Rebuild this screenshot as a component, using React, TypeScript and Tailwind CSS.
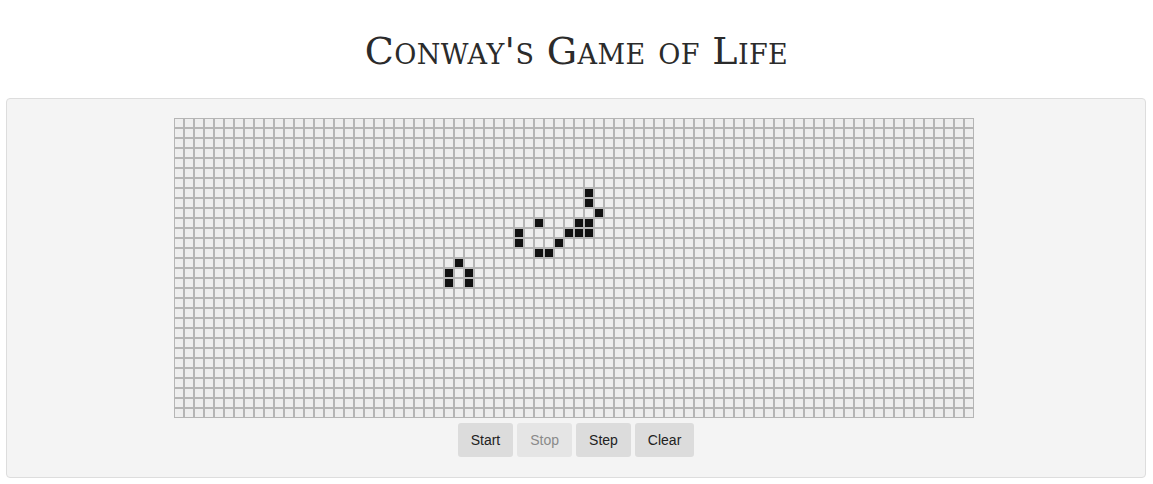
import { useState } from "react";

const COLS = 80;
const ROWS = 30;

const initialLive: [number, number][] = [
  [7, 41],
  [8, 41],
  [9, 42],
  [10, 36],
  [10, 40],
  [10, 41],
  [11, 34],
  [11, 39],
  [11, 40],
  [11, 41],
  [12, 34],
  [12, 38],
  [13, 36],
  [13, 37],
  [14, 28],
  [15, 27],
  [15, 29],
  [16, 27],
  [16, 29],
];

const makeBoard = () => {
  const board: boolean[][] = Array.from({ length: ROWS }, () =>
    Array(COLS).fill(false)
  );
  initialLive.forEach(([r, c]) => {
    board[r][c] = true;
  });
  return board;
};

const Cell = ({ alive, onClick }: { alive: boolean; onClick: () => void }) => (
  <div
    onClick={onClick}
    className={`w-[10px] h-[10px] border border-[#b5b5b5] ${
      alive ? "bg-[#111111]" : "bg-[#eeeeee]"
    }`}
  />
);

const Button = ({
  label,
  disabled,
  onClick,
}: {
  label: string;
  disabled?: boolean;
  onClick?: () => void;
}) => (
  <button
    disabled={disabled}
    onClick={onClick}
    className={`h-[34px] px-[13px] rounded-[3px] text-[14px] ${
      disabled ? "bg-[#e5e5e5] text-[#8a8a8a]" : "bg-[#dcdcdc] text-[#222]"
    }`}
  >
    {label}
  </button>
);

const App = () => {
  const [board, setBoard] = useState(makeBoard);

  const toggle = (r: number, c: number) => {
    setBoard((b) =>
      b.map((row, ri) => row.map((v, ci) => (ri === r && ci === c ? !v : v)))
    );
  };

  return (
    <div className="min-h-screen bg-white font-['Liberation_Sans',Arial,sans-serif]">
      <div className="h-[98px] flex items-center justify-center">
        <h1
          className="text-[38px] text-[#2b2b2b] pt-[4px] font-['DejaVu_Serif','Liberation_Serif',serif] [font-variant:small-caps] tracking-[0.4px]"
        >
          Conway's Game of Life
        </h1>
      </div>
      <div className="ml-[6px] mr-[7px] h-[380px] bg-[#f4f4f4] border border-[#dddddd] rounded-[4px] flex flex-col items-center pt-[19px]">
        <div className="grid grid-cols-[repeat(80,10px)] mr-[4px]">
          {board.map((row, r) =>
            row.map((alive, c) => (
              <Cell key={`${r}-${c}`} alive={alive} onClick={() => toggle(r, c)} />
            ))
          )}
        </div>
        <div className="flex gap-[4px] mt-[5px]">
          <Button label="Start" />
          <Button label="Stop" disabled />
          <Button label="Step" />
          <Button label="Clear" onClick={() => setBoard(makeBoard)} />
        </div>
      </div>
    </div>
  );
};

export default App;
